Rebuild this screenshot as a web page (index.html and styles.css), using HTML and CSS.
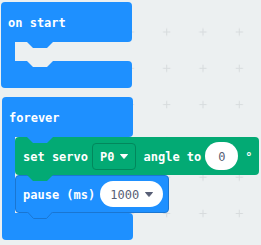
FILE: index.html
```html
<!DOCTYPE html>
<html lang="en">
<head>
    <meta charset="UTF-8" />
    <title>MakeCode blocks</title>
    <link rel="stylesheet" href="styles.css">
</head>
<body>

<svg class="grid" width="261" height="245" aria-hidden="true">
    <defs>
        <pattern id="cross" width="36.3" height="36.3" x="3.35" y="13.85" patternUnits="userSpaceOnUse">
            <path d="M18.15 14.5v7.3M14.5 18.15h7.3" stroke="#d7dbdd" stroke-width="1" fill="none" />
        </pattern>
    </defs>
    <rect width="261" height="245" fill="url(#cross)" />
</svg>

<div class="workspace">

    <!-- on start -->
    <div class="hat">
        <div class="hat-head">
            <span class="label">on start</span>
            <svg class="tab tab-blue" width="26" height="7" viewBox="0 0 26 7"><path d="M0 0L6 6H20L26 0Z" /></svg>
        </div>
        <div class="hat-body">
            <div class="stripe"></div>
            <div class="slot">
                <svg class="tab tab-bg" width="26" height="7" viewBox="0 0 26 7"><path d="M0 0L6 6H20L26 0Z" /></svg>
            </div>
        </div>
        <div class="hat-foot"></div>
    </div>

    <!-- forever -->
    <div class="hat forever">
        <div class="hat-head">
            <span class="label">forever</span>
            <svg class="tab tab-blue" width="26" height="7" viewBox="0 0 26 7"><path d="M0 0L6 6H20L26 0Z" /></svg>
        </div>
        <div class="hat-body">
            <div class="stripe"></div>
            <div class="stack">
                <div class="stmt servo">
                    <span class="label">set servo</span>
                    <span class="dropdown">P0
                        <svg class="caret" width="8" height="5" viewBox="0 0 8 5"><path d="M0.5 0.5H7.5L4 4.5Z" fill="#fff" stroke="#fff" stroke-linejoin="round" /></svg>
                    </span>
                    <span class="label angle">angle to</span>
                    <span class="num num-angle">0</span>
                    <span class="label degree">°</span>
                    <svg class="tab tab-green" width="26" height="7" viewBox="0 0 26 7"><path d="M0 0L6 6H20L26 0Z" /></svg>
                </div>
                <div class="stmt pause">
                    <span class="label">pause (ms)</span>
                    <span class="num num-pause">1000
                        <svg class="caret" width="8" height="5" viewBox="0 0 8 5"><path d="M0.5 0.5H7.5L4 4.5Z" fill="#575e75" stroke="#575e75" stroke-linejoin="round" /></svg>
                    </span>
                    <svg class="tab tab-outline" width="26" height="8" viewBox="0 0 26 8"><path d="M0 0L6.5 6.5H19.5L26 0Z" fill="#1e90ff" /><path d="M0.5 0L6.5 6.5H19.5L25.5 0" fill="none" stroke="#1a76d2" /></svg>
                </div>
            </div>
        </div>
        <div class="hat-foot"></div>
    </div>

</div>

</body>
</html>
```

FILE: styles.css
```css
body {
    margin: 0; background: #ecf0f1; overflow: hidden;
    font-family: "DejaVu Sans Mono", "Liberation Mono", monospace;
    font-size: 12px; color: white;
}
.grid { position: fixed; left: 0; top: 0; z-index: -1; }

.workspace { padding: 2px 0 0 1px; }

.hat { width: 131px; position: relative; }
.hat.forever { margin: 9px 0 0 1px; }

.hat-head {
    height: 40px; background: #1e90ff; position: relative;
    border-radius: 4px 4px 4px 0;
    display: flex; align-items: center; padding-left: 7px;
    box-sizing: border-box;
}
.hat-body { display: flex; }
.stripe { width: 14px; flex: none; background: #1e90ff; }
.forever .stripe { width: 13px; }
.slot { height: 19px; flex: 1; position: relative; }
.hat-foot {
    height: 27px; background: #1e90ff;
    border-radius: 0 4px 4px 4px;
}

.label { font-weight: bold; white-space: nowrap; padding-top: 2px; }

.tab { position: absolute; top: 100%; left: 26px; z-index: 1; display: block; }
.forever .hat-head .tab { left: 25px; }
.slot .tab, .stmt .tab { left: 12px; }
.tab-blue { fill: #1e90ff; }
.tab-bg { fill: #ecf0f1; }
.tab-green { fill: #03aa74; }
.stmt .tab-outline { left: 11px; }

.stack { display: flex; flex-direction: column; align-items: flex-start; }

.stmt {
    position: relative; display: flex; align-items: center;
    height: 38px; box-sizing: border-box; white-space: nowrap;
}
.servo {
    background: #03aa74; border-radius: 4px;
    padding: 0 6px 0 8px;
}
.pause {
    background: #1e90ff; border: 1px solid #1a76d2; border-radius: 4px;
    padding: 0 5px 0 7px;
}

.dropdown {
    display: flex; align-items: center; gap: 6px;
    height: 27px; box-sizing: border-box; margin-left: 4px;
    padding: 2px 7px 0 7px; border: 1px solid #02875c; border-radius: 4px;
    font-weight: bold;
}
.caret { display: block; margin-top: -1px; }
.angle { margin-left: 7px; }

.num {
    display: flex; align-items: center; justify-content: center;
    background: white; color: #575e75; box-sizing: border-box;
    padding-top: 2px;
}
.num-angle { width: 33px; height: 28px; border-radius: 14px; margin-left: 4px; }
.num-pause {
    width: 63px; height: 26px; border-radius: 13px; margin-left: 5px;
    gap: 6px; justify-content: flex-start; padding-left: 10px;
}
.degree { margin-left: 7px; }
```
